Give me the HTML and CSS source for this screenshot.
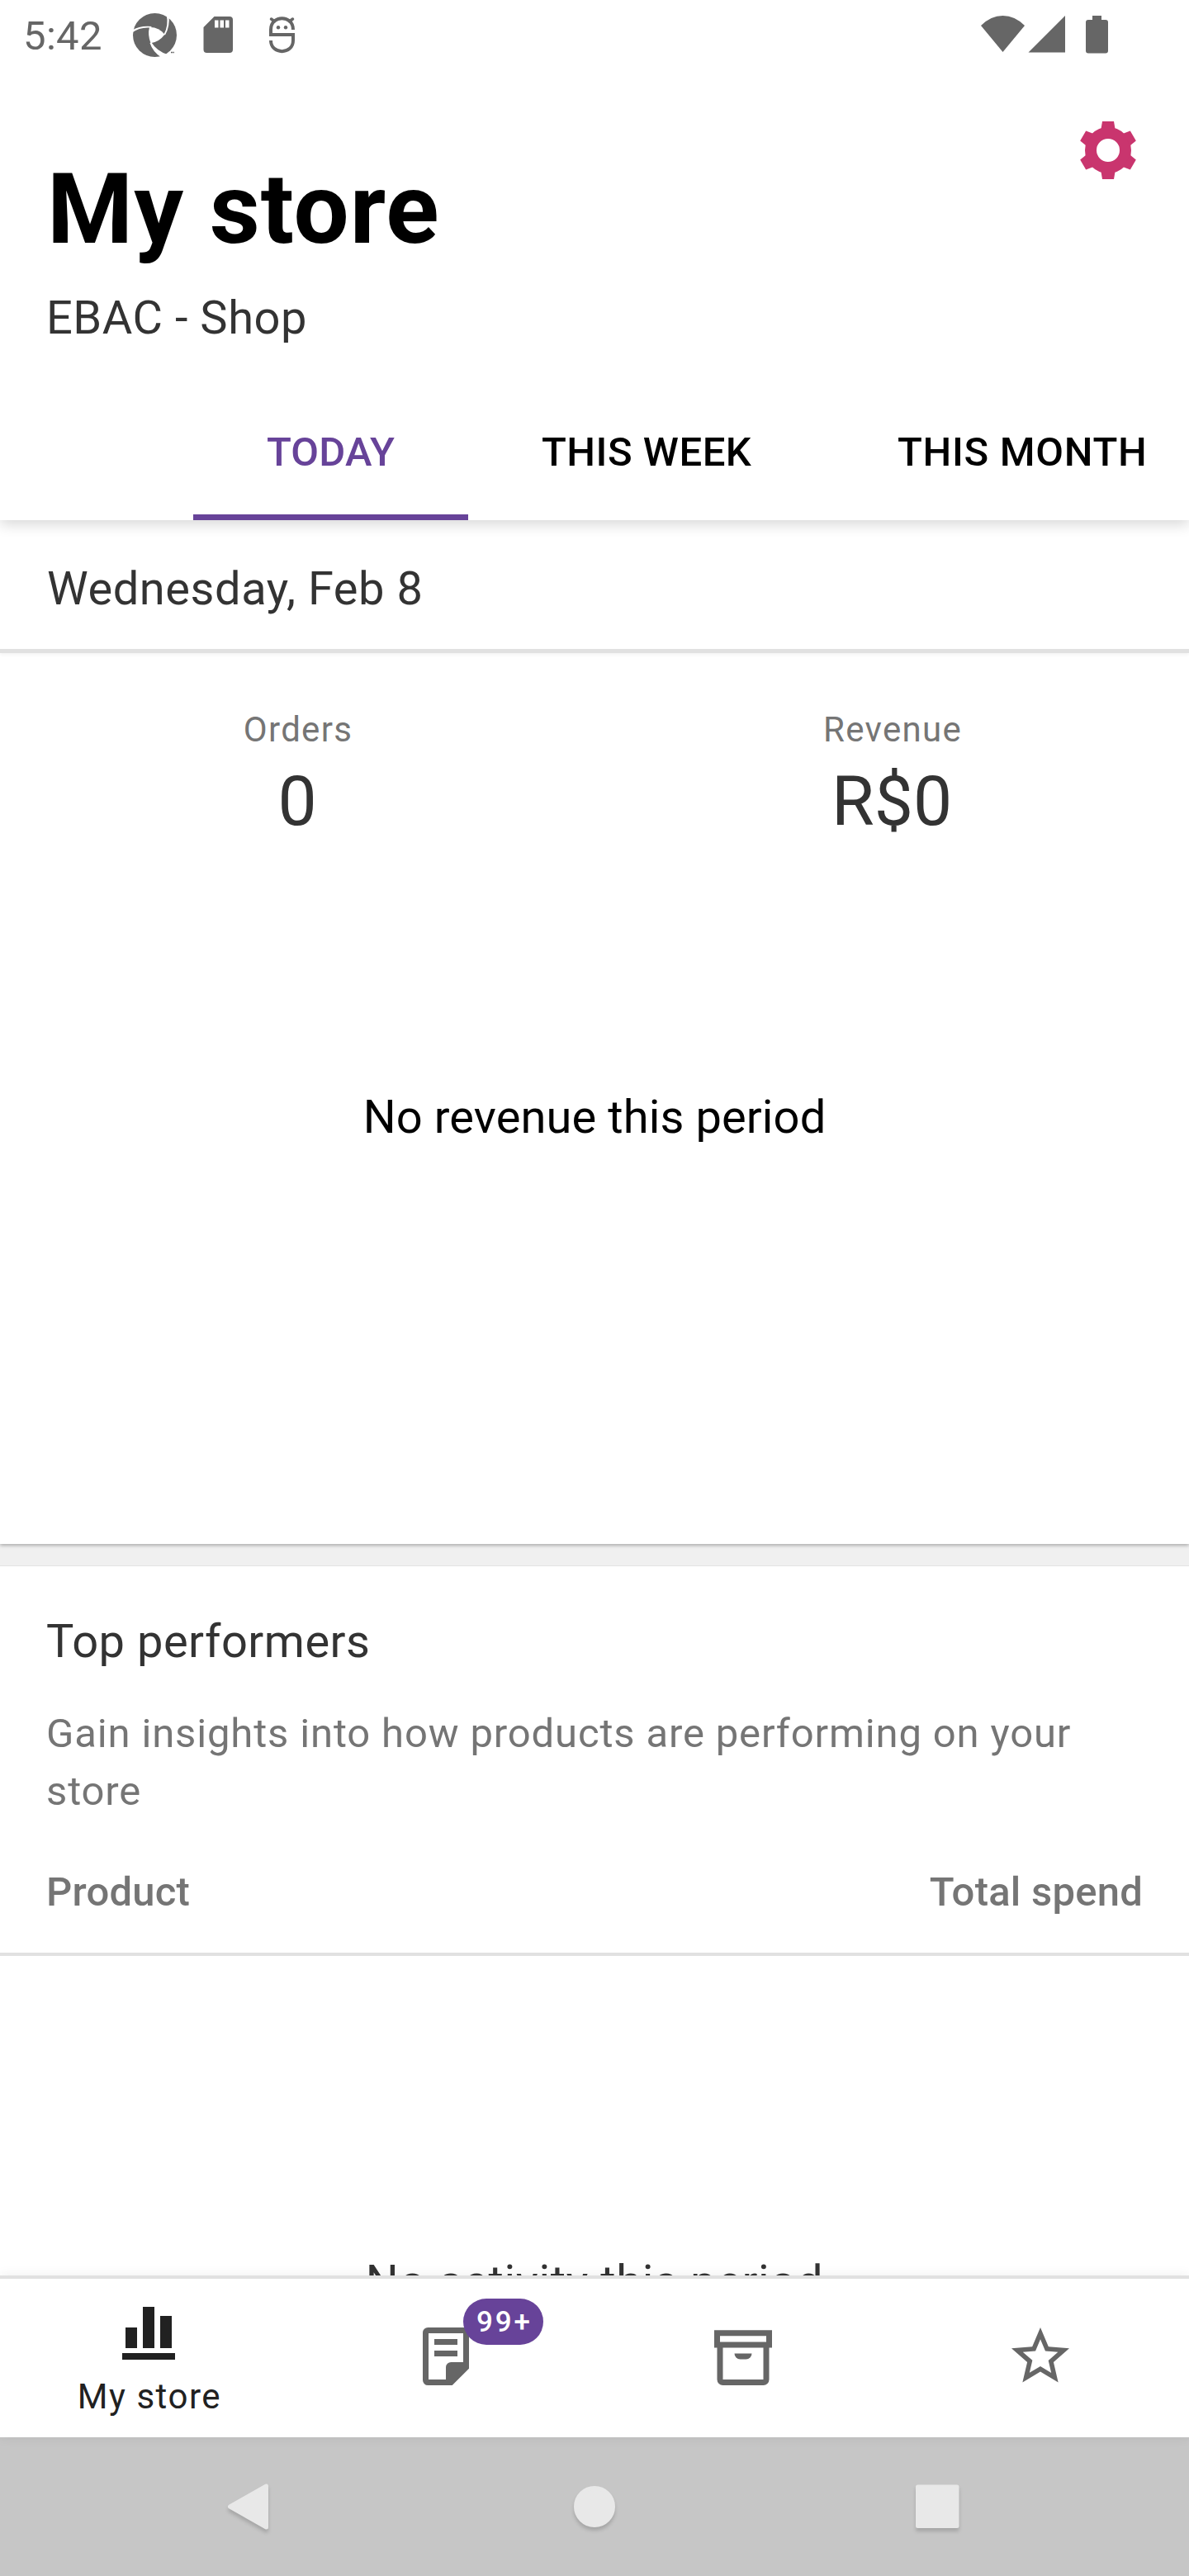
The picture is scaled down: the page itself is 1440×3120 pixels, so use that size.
FILE: index.html
```html
<!DOCTYPE html>
<html lang="en">
<head>
<meta charset="utf-8">
<title>My store</title>
<link rel="stylesheet" href="styles.css">
</head>
<body>
<div class="screen">
  <div class="status-bar">
    <span class="clock">5:42</span>
    <svg class="status-left" viewBox="150 0 220 84" width="220" height="84">
      <circle cx="187.500" cy="42.500" r="26.500" fill="#666"/>
      <g fill="#fff">
        <path d="M181 33Q192 32.500 199.500 41.700Q193 50.500 182.500 52.300Q178.500 42 181 33Z"/>
        <path d="M160 39.500Q169 32.500 182 33.500L184 32Q170 30.500 160 36.500Z"/>
        <path d="M201.500 17Q204.500 31 198.500 41.500L200 42.500Q206 32 204.500 19Z"/>
        <path d="M181.500 52Q185 63 196 70L203 66Q190 62 183.500 51.500Z"/>
      </g>
      <path d="M207 63.500h2M209.500 63.500h1.500" stroke="#666" stroke-width="1.500"/>
      <path fill="#666" fill-rule="evenodd" d="M259.500 20H278a4 4 0 0 1 4 4V60a4 4 0 0 1-4 4H250.500a4 4 0 0 1-4-4V33ZM260 24.500v9h4.500v-9ZM266.500 24.500v9h4.500v-9ZM273 24.500v9h4.500v-9Z"/>
      <g fill="none" stroke="#666" stroke-width="4">
        <path d="M355 36C355 17.500 328 17.500 328 36V42H355V49C355 66.500 328 66.500 328 49"/>
        <path d="M328.500 23l4 3M354.500 23l-4 3" stroke-linecap="round" stroke-width="3.500"/>
      </g>
      <circle cx="337" cy="33.300" r="2.200" fill="#666"/>
      <circle cx="346" cy="33.300" r="2.200" fill="#666"/>
    </svg>
    <svg class="status-right" viewBox="1180 0 170 84" width="170" height="84" fill="#666">
      <path d="M1188 31Q1200 19 1214.500 19T1241 31L1214.500 63Z"/>
      <path d="M1290 19V63.500H1245.500Z"/>
      <path d="M1323 19h11v5h5a3 3 0 0 1 3 3V61.500a3 3 0 0 1-3 3h-21a3 3 0 0 1-3-3V27a3 3 0 0 1 3-3h5Z"/>
    </svg>
  </div>

  <header class="app-header">
    <div>
      <h1 class="title">My store</h1>
      <p class="site-name">EBAC - Shop</p>
    </div>
    <svg class="settings" viewBox="-42 -42 84 84" width="84" height="84" fill="#c9356e">
      <defs><path id="tooth" d="M-8.500 -26L-7 -35H7L8.500 -26Z"/></defs>
      <circle r="21" fill="none" stroke="#c9356e" stroke-width="14"/>
      <use href="#tooth"/>
      <use href="#tooth" transform="rotate(60)"/>
      <use href="#tooth" transform="rotate(120)"/>
      <use href="#tooth" transform="rotate(180)"/>
      <use href="#tooth" transform="rotate(240)"/>
      <use href="#tooth" transform="rotate(300)"/>
    </svg>
  </header>

  <nav class="tabs">
    <span class="tab tab-active">TODAY</span>
    <span class="tab tab-week">THIS WEEK</span>
    <span class="tab tab-month">THIS MONTH</span>
  </nav>

  <main class="content">
    <div class="date">Wednesday, Feb 8</div>
    <section class="stats">
      <div class="totals">
        <div class="total"><span class="label">Orders</span><span class="value">0</span></div>
        <div class="total"><span class="label">Revenue</span><span class="value">R$0</span></div>
      </div>
      <p class="empty-chart">No revenue this period</p>
    </section>
    <section class="performers">
      <h2 class="section-title">Top performers</h2>
      <p class="hint">Gain insights into how products are performing on your store</p>
      <div class="columns"><span>Product</span><span>Total spend</span></div>
      <p class="empty-list">No activity this period</p>
    </section>
  </main>

  <nav class="bottom-nav">
    <div class="nav-item nav-active">
      <svg viewBox="0 0 84 84" width="84" height="84" fill="#212121">
        <path d="M14 35h14v25H14ZM35 10h14v50H35ZM56 21h14v39H56ZM10 66h64v8H10Z"/>
      </svg>
      <span class="nav-label">My store</span>
    </div>
    <div class="nav-item">
      <svg viewBox="0 0 24 24" width="84" height="84" fill="#666">
        <path fill-rule="evenodd" d="M5.800 2H18.200A1.800 1.800 0 0 1 20 3.800V16.200L14.200 22H5.800A1.800 1.800 0 0 1 4 20.200V3.800A1.800 1.800 0 0 1 5.800 2ZM6 4V20H12V15.800A1.800 1.800 0 0 1 13.800 14H18V4Z"/>
        <path d="M8 6h8v2H8ZM8 10h8v2H8Z"/>
      </svg>
      <span class="badge">99+</span>
    </div>
    <div class="nav-item">
      <svg viewBox="0 0 24 24" width="84" height="84" fill="#666">
        <path fill-rule="evenodd" d="M2 2.900H22V9H21V20a2 2 0 0 1-2 2H5a2 2 0 0 1-2-2V9H2ZM4 4.900V7H20V4.900ZM5 9V20H19V9ZM9 11H15A2 2 0 0 1 13 13H11A2 2 0 0 1 9 11Z"/>
      </svg>
    </div>
    <div class="nav-item">
      <svg viewBox="0 0 24 24" width="84" height="84" fill="#666">
        <path d="M22 9.240l-7.190-.62L12 2 9.190 8.630 2 9.240l5.460 4.730L5.820 21 12 17.270 18.180 21l-1.630-7.030L22 9.240zM12 15.400l-3.760 2.270 1-4.280-3.320-2.880 4.380-.38L12 6.100l1.710 4.040 4.380.38-3.320 2.880 1 4.280L12 15.400z"/>
      </svg>
    </div>
  </nav>

  <div class="system-nav">
    <svg viewBox="0 0 84 84" width="84" height="84"><path d="M16.500 42L60.500 17V67Z"/></svg>
    <svg viewBox="0 0 84 84" width="84" height="84"><circle cx="42" cy="42" r="22.500"/></svg>
    <svg viewBox="0 0 84 84" width="84" height="84"><rect x="17.500" y="18" width="47.500" height="47.500"/></svg>
  </div>
</div>
</body>
</html>
```
FILE: styles.css
```css
* { box-sizing: border-box; }
body, h1, h2, p { margin: 0; font-weight: 400; }
body { background: #fff; font-family: Roboto, sans-serif; color: #333; }
svg { display: block; flex: none; }
.screen { width: 1440px; height: 3120px; display: flex; flex-direction: column; overflow: hidden; }

.status-bar { height: 84px; flex: none; display: flex; padding: 0 90px 0 28px; color: #666; }
.clock { width: 122px; font-size: 49px; line-height: 88.5px; letter-spacing: .35px; }
.status-right { margin-left: auto; }

.app-header { height: 378px; flex: none; display: flex; justify-content: space-between; padding: 56px 56px 0 57px; }
.title { padding-top: 44px; font-size: 119px; line-height: 140px; font-weight: 700; letter-spacing: 1px; color: #000; }
.site-name { margin: 28px 0 0 -1px; font-size: 56px; line-height: 66px; letter-spacing: .53px; }

.tabs { position: relative; z-index: 1; height: 168px; flex: none; display: flex; padding-left: 234px; background: #fff; box-shadow: 0 5px 16px rgba(0,0,0,.16); clip-path: inset(0 0 -30px 0); }
.tab { flex: none; height: 168px; padding-top: 3px; font-size: 49px; line-height: 166px; font-weight: 500; color: #000; letter-spacing: .5px; }
.tab-active { width: 333px; text-align: center; color: #674399; letter-spacing: .2px; border-bottom: 7px solid #674399; }
.tab-week { padding-left: 89px; width: 520px; }
.tab-month { letter-spacing: .68px; }

.content { flex: 1; min-height: 0; overflow: hidden; background: #f0f0f0; }
.date { position: relative; height: 161px; padding-left: 57px; background: #fff; border-bottom: 5px solid #e1e1e1; box-shadow: 0 2px 4px rgba(0,0,0,.05); font-size: 56px; line-height: 166px; letter-spacing: .56px; }
.stats { height: 1079px; padding-top: 68px; background: #fff; box-shadow: 0 2px 4px rgba(0,0,0,.28); }
.totals { display: flex; }
.total { flex: 1; display: flex; flex-direction: column; align-items: center; }
.label { padding-left: 2px; font-size: 42px; line-height: 49px; letter-spacing: 1.3px; color: #757575; }
.value { margin: 13px 0 -12px; font-size: 84px; line-height: 99px; }
.empty-chart { margin-top: 312px; text-align: center; font-size: 56px; line-height: 66px; letter-spacing: .11px; color: #000; }
.performers { margin-top: 27px; height: 900px; padding-top: 58px; background: #fff; box-shadow: 0 0 1px rgba(0,0,0,.3); }
.section-title { padding-left: 56px; font-size: 56px; line-height: 66px; letter-spacing: .49px; }
.hint { margin-top: 44px; padding: 0 56px; font-size: 49px; line-height: 70px; letter-spacing: .85px; color: #757575; }
.columns { display: flex; justify-content: space-between; margin-top: 24px; height: 140px; padding: 34px 56px 0; border-bottom: 4px solid #e1e1e1; font-size: 49px; line-height: 58px; font-weight: 500; letter-spacing: .23px; color: #757575; }
.empty-list { margin-top: 362px; text-align: center; font-size: 56px; line-height: 66px; letter-spacing: .63px; }

.bottom-nav { position: relative; height: 196px; flex: none; display: grid; grid-template-columns: repeat(4, 1fr); background: #fff; border-top: 4px solid #e1e1e1; box-shadow: 0 0 14px rgba(0,0,0,.07); }
.nav-item { position: relative; display: flex; flex-direction: column; align-items: center; padding-top: 52px; }
.nav-active { padding-top: 24px; }
.nav-label { margin-top: 10px; padding-left: 2px; font-size: 42px; line-height: 50px; letter-spacing: 1.53px; color: #212121; }
.badge { position: absolute; left: 201px; top: 24px; width: 97px; height: 56px; padding-left: 3px; border-radius: 28px; background: #674399; color: #fff; font-size: 35px; line-height: 57px; font-weight: 500; letter-spacing: 2.9px; text-align: center; }

.system-nav { height: 168px; flex: none; display: flex; justify-content: space-between; padding: 42px 262px 0; background: #c6c6c6; }
.system-nav svg { fill: #e8e8e8; stroke: #e8e8e8; stroke-width: 5; stroke-linejoin: round; filter: drop-shadow(0 4px 2px rgba(0,0,0,.16)); }
```
